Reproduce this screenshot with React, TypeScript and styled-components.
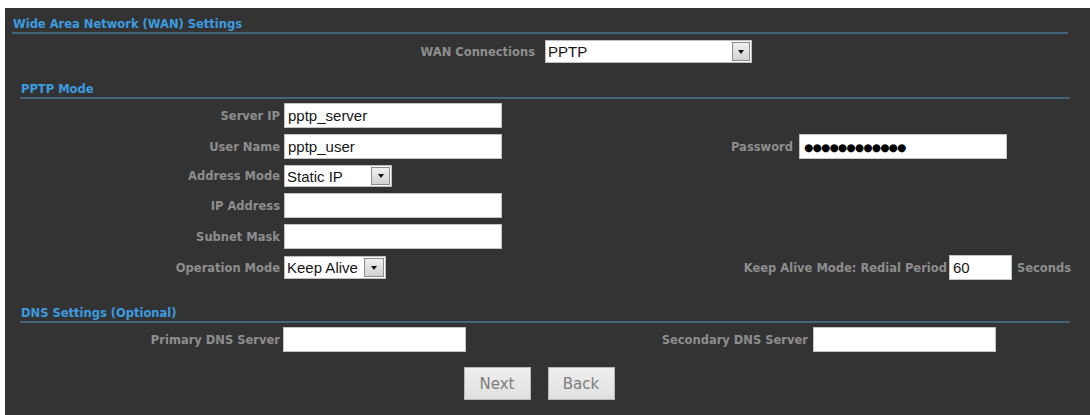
import styled, { createGlobalStyle } from 'styled-components';

const GlobalStyle = createGlobalStyle`
  html, body {
    margin: 0;
    padding: 0;
    background: #ffffff;
  }
  body {
    font-family: "DejaVu Sans", Verdana, sans-serif;
  }
`;

const Panel = styled.div`
  margin: 8px 0 0 5px;
  min-height: 407px;
  background: #333333;
  overflow: hidden;
`;

const Content = styled.div`
  padding: 9px 18px 0 7px;
`;

const Heading = styled.div<{ $indent?: number; $top?: number; $right?: number }>`
  margin: ${p => p.$top ?? 0}px ${p => p.$right ?? 2}px 0 ${p => p.$indent ?? 0}px;
  padding: 0 0 1px 1px;
  border-bottom: 2px solid #42667c;
  color: #3d9ce0;
  font: bold 11.5px/14px "DejaVu Sans", Verdana, sans-serif;
  white-space: nowrap;
`;

const Label = styled.span<{ $pad?: number }>`
  padding-right: ${p => p.$pad ?? 4}px;
  text-align: right;
  color: #8e8e8e;
  font: bold 11.5px/14px "DejaVu Sans", Verdana, sans-serif;
  white-space: nowrap;
`;

const WanRow = styled.div`
  display: grid;
  grid-template-columns: 523px 1fr;
  column-gap: 10px;
  align-items: center;
  margin-top: 6px;
`;

const Rows = styled.div<{ $top: number }>`
  display: flex;
  flex-direction: column;
  gap: 6px;
  margin-top: ${p => p.$top}px;
`;

const FormRow = styled.div<{ $cols: string }>`
  display: grid;
  grid-template-columns: ${p => p.$cols};
  align-items: center;
`;

const Cell = styled.div``;

const KeepAliveCell = styled.div`
  grid-column: 3 / 5;
  display: flex;
  align-items: center;
  justify-content: flex-end;
  gap: 2px;
  margin-right: 1px;
`;

const Unit = styled.span`
  margin-left: 3px;
  color: #8e8e8e;
  font: bold 11.5px/14px "DejaVu Sans", Verdana, sans-serif;
  white-space: nowrap;
`;

const TextInput = styled.input<{ $w: number; $h?: number }>`
  box-sizing: border-box;
  display: block;
  width: ${p => p.$w}px;
  height: ${p => p.$h ?? 25}px;
  margin: 0;
  padding: 0 3px;
  border: 1px solid #c4c4c4;
  background: #ffffff;
  color: #151515;
  font: 15px "Liberation Sans", Arial, sans-serif;
  outline: none;
`;

const PasswordInput = styled(TextInput)`
  padding-left: 4px;
  font: 10.5px "DejaVu Sans", sans-serif;
  letter-spacing: -0.7px;
  color: #000000;
`;

const SelectBox = styled.div<{ $w: number; $h: number }>`
  box-sizing: border-box;
  display: flex;
  width: ${p => p.$w}px;
  height: ${p => p.$h}px;
  background: #ffffff;
  border: 1px solid #bdbdbd;
`;

const SelectValue = styled.span`
  flex: 1;
  display: flex;
  align-items: center;
  padding-left: 2px;
  overflow: hidden;
  color: #151515;
  font: 15px "Liberation Sans", Arial, sans-serif;
  white-space: nowrap;
`;

const SelectButton = styled.span<{ $w: number }>`
  box-sizing: border-box;
  display: flex;
  align-items: center;
  justify-content: center;
  width: ${p => p.$w}px;
  margin: 1px;
  background: linear-gradient(#f0f0f0, #d2d2d2);
  border: 1px solid #8c8c8c;
`;

const Arrow = styled.span`
  width: 0;
  height: 0;
  border-left: 3.5px solid transparent;
  border-right: 3.5px solid transparent;
  border-top: 4px solid #111111;
`;

const ButtonRow = styled.div`
  display: flex;
  justify-content: center;
  gap: 17px;
  margin-top: 15px;
  padding-right: 6px;
`;

const Button = styled.button`
  width: 67px;
  height: 33px;
  padding: 0;
  border: 1px solid #b8b8b8;
  background: linear-gradient(#efefef, #e0e0e0);
  color: #7d7d7d;
  font: 15px "DejaVu Sans", Verdana, sans-serif;
  cursor: pointer;
`;

type SelectProps = { value: string; width: number; height?: number; button?: number };

function Select({ value, width, height = 22, button = 19 }: SelectProps) {
  return (
    <SelectBox $w={width} $h={height}>
      <SelectValue>{value}</SelectValue>
      <SelectButton $w={button}>
        <Arrow />
      </SelectButton>
    </SelectBox>
  );
}

const PPTP_COLS = '272px 300px 215px 1fr';
const DNS_COLS = '271px 300px 230px 1fr';

export default function App() {
  return (
    <>
      <GlobalStyle />
      <Panel>
        <Content>
          <Heading $right={4}>Wide Area Network (WAN) Settings</Heading>

          <WanRow>
            <Label $pad={0}>WAN Connections</Label>
            <Select value="PPTP" width={207} height={23} button={18} />
          </WanRow>

          <Heading $indent={8} $top={19}>PPTP Mode</Heading>

          <Rows $top={4}>
            <FormRow $cols={PPTP_COLS}>
              <Label>Server IP</Label>
              <TextInput $w={218} value="pptp_server" readOnly />
            </FormRow>
            <FormRow $cols={PPTP_COLS}>
              <Label>User Name</Label>
              <TextInput $w={218} value="pptp_user" readOnly />
              <Label $pad={6}>Password</Label>
              <PasswordInput $w={208} value="●●●●●●●●●●●●" readOnly />
            </FormRow>
            <FormRow $cols={PPTP_COLS}>
              <Label>Address Mode</Label>
              <Select value="Static IP" width={108} />
            </FormRow>
            <FormRow $cols={PPTP_COLS}>
              <Label>IP Address</Label>
              <TextInput $w={218} value="" readOnly />
            </FormRow>
            <FormRow $cols={PPTP_COLS}>
              <Label>Subnet Mask</Label>
              <TextInput $w={218} value="" readOnly />
            </FormRow>
            <FormRow $cols={PPTP_COLS}>
              <Label>Operation Mode</Label>
              <Cell>
                <Select value="Keep Alive" width={102} height={23} button={20} />
              </Cell>
              <KeepAliveCell>
                <Label $pad={0}>Keep Alive Mode: Redial Period</Label>
                <TextInput $w={63} value="60" readOnly />
                <Unit>Seconds</Unit>
              </KeepAliveCell>
            </FormRow>
          </Rows>

          <Heading $indent={8} $top={26}>DNS Settings (Optional)</Heading>

          <Rows $top={4}>
            <FormRow $cols={DNS_COLS}>
              <Label $pad={3}>Primary DNS Server</Label>
              <TextInput $w={183} value="" readOnly />
              <Label $pad={5}>Secondary DNS Server</Label>
              <TextInput $w={183} value="" readOnly />
            </FormRow>
          </Rows>

          <ButtonRow>
            <Button type="button">Next</Button>
            <Button type="button">Back</Button>
          </ButtonRow>
        </Content>
      </Panel>
    </>
  );
}
